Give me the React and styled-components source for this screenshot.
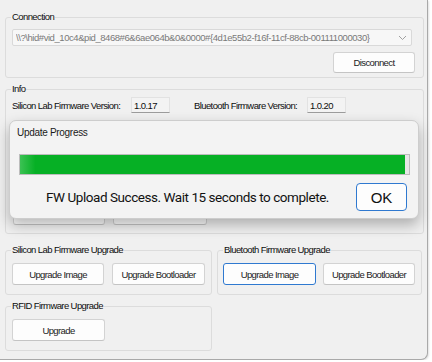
import React from 'react';
import styled, { createGlobalStyle } from 'styled-components';

const GlobalStyle = createGlobalStyle`
  html, body {
    margin: 0;
    padding: 0;
    background: #ffffff;
  }
  body {
    font-family: "Liberation Sans", Arial, sans-serif;
  }
`;

const App = () => {
  return (
    <>
      <GlobalStyle />
      <Window>
        <GroupBox $h={67}>
          <Legend>Connection</Legend>
          <GroupBody $pt={6}>
            <ComboBox>
              <ComboText>
                {'\\\\?\\hid#vid_10c4&pid_8468#6&6ae064b&0&0000#{4d1e55b2-f16f-11cf-88cb-001111000030}'}
              </ComboText>
              <Chevron width="9" height="6" viewBox="0 0 9 6">
                <path d="M1 1 L4.5 4.5 L8 1" fill="none" stroke="#a0a0a0" strokeWidth="1" />
              </Chevron>
            </ComboBox>
            <ButtonRow $justify="flex-end" $pt={6} $pr={2}>
              <Button $w={82} $h={21}>Disconnect</Button>
            </ButtonRow>
          </GroupBody>
        </GroupBox>

        <GroupBox $h={151} $mt={5}>
          <Legend>Info</Legend>
          <GroupBody $pt={2}>
            <InfoRow>
              <Label $w={119}>Silicon Lab Firmware Version:</Label>
              <ValueBox>1.0.17</ValueBox>
              <Label $w={113} $ml={24}>Bluetooth Firmware Version:</Label>
              <ValueBox>1.0.20</ValueBox>
            </InfoRow>
            <ButtonRow $pt={91} $gap={8} $pl={1}>
              <Button $w={92} $h={21}>Read Version</Button>
              <Button $w={94} $h={21}>Reset Device</Button>
            </ButtonRow>
          </GroupBody>
        </GroupBox>

        <UpgradeRow>
          <GroupBox $h={51} $w={207}>
            <Legend>Silicon Lab Firmware Upgrade</Legend>
            <GroupBody $pt={7}>
              <ButtonRow $gap={8}>
                <Button $w={93} $h={22}>Upgrade Image</Button>
                <Button $w={94} $h={22}>Upgrade Bootloader</Button>
              </ButtonRow>
            </GroupBody>
          </GroupBox>
          <GroupBox $h={51} $w={205}>
            <Legend>Bluetooth Firmware Upgrade</Legend>
            <GroupBody $pt={7}>
              <ButtonRow $gap={7} $pl={-1}>
                <Button $w={95} $h={22} $focused>Upgrade Image</Button>
                <Button $w={94} $h={22}>Upgrade Bootloader</Button>
              </ButtonRow>
            </GroupBody>
          </GroupBox>
        </UpgradeRow>

        <GroupBox $h={51} $w={207} $mt={5}>
          <Legend>RFID Firmware Upgrade</Legend>
          <GroupBody $pt={7}>
            <ButtonRow>
              <Button $w={93} $h={22}>Upgrade</Button>
            </ButtonRow>
          </GroupBody>
        </GroupBox>

        <Modal>
          <ModalTitle>Update Progress</ModalTitle>
          <ProgressTrack>
            <ProgressFill style={{ width: '98.9%' }} />
          </ProgressTrack>
          <ModalFooter>
            <Message>FW Upload Success. Wait 15 seconds to complete.</Message>
            <OkButton>OK</OkButton>
          </ModalFooter>
        </Modal>
      </Window>
    </>
  );
};

const Window = styled.div`
  position: relative;
  box-sizing: border-box;
  width: 428px;
  height: 360px;
  padding: 11px 3px 0 5px;
  background: #f0f0f0;
  border-right: 1px solid #a9a9a9;
  border-bottom: 1px solid #a9a9a9;
  border-bottom-right-radius: 7px;
  box-shadow: 1px 1px 2px rgba(0, 0, 0, 0.12);
  display: flex;
  flex-direction: column;
  color: #0d0d0d;
  font-size: 9.5px;
  letter-spacing: -0.6px;
`;

const GroupBox = styled.fieldset`
  box-sizing: border-box;
  min-width: 0;
  width: ${(p) => (p.$w ? `${p.$w}px` : 'auto')};
  height: ${(p) => p.$h}px;
  margin: ${(p) => p.$mt || 0}px 0 0 0;
  padding: 0 6px;
  border: 1px solid #dcdcdc;
  border-radius: 3px;
`;

const Legend = styled.legend`
  padding: 0 1px;
  margin-left: -1px;
  line-height: 12px;
  font-size: 9.5px;
  color: #0d0d0d;
`;

const GroupBody = styled.div`
  display: flex;
  flex-direction: column;
  padding-top: ${(p) => p.$pt || 0}px;
`;

const ComboBox = styled.div`
  box-sizing: border-box;
  width: 400px;
  height: 17px;
  display: flex;
  align-items: center;
  justify-content: space-between;
  padding: 0 4px 0 3px;
  background: #f7f7f7;
  border: 1px solid #d9d9d9;
  border-radius: 2px;
`;

const ComboText = styled.span`
  color: #7a7a7a;
  letter-spacing: -0.44px;
  white-space: nowrap;
  overflow: hidden;
`;

const Chevron = styled.svg`
  flex: none;
`;

const ButtonRow = styled.div`
  display: flex;
  justify-content: ${(p) => p.$justify || 'flex-start'};
  gap: ${(p) => p.$gap || 0}px;
  padding-top: ${(p) => p.$pt || 0}px;
  padding-right: ${(p) => p.$pr || 0}px;
  margin-left: ${(p) => p.$pl || 0}px;
`;

const Button = styled.div`
  box-sizing: border-box;
  width: ${(p) => p.$w}px;
  height: ${(p) => p.$h}px;
  display: flex;
  align-items: center;
  justify-content: center;
  background: #fdfdfd;
  border: 1px solid ${(p) => (p.$focused ? '#2f79d0' : '#d3d3d3')};
  border-bottom-color: ${(p) => (p.$focused ? '#2f79d0' : '#c4c4c4')};
  border-radius: 3px;
  color: #1b1b1b;
  white-space: nowrap;
`;

const InfoRow = styled.div`
  display: flex;
  align-items: center;
  height: 16px;
`;

const Label = styled.span`
  flex: none;
  width: ${(p) => p.$w}px;
  margin-left: ${(p) => p.$ml || 0}px;
  white-space: nowrap;
`;

const ValueBox = styled.div`
  box-sizing: border-box;
  flex: none;
  width: 39px;
  height: 16px;
  padding-left: 2px;
  display: flex;
  align-items: center;
  background: #f3f3f3;
  border: 1px solid #e2e2e2;
  border-bottom: 1px solid #9c9c9c;
`;

const UpgradeRow = styled.div`
  display: flex;
  gap: 5px;
  margin-top: 10px;
`;

const Modal = styled.div`
  position: absolute;
  left: 9px;
  top: 120px;
  box-sizing: border-box;
  width: 410px;
  height: 99px;
  padding: 6px 11px 0 9px;
  background: #f3f3f3;
  border: 1px solid #cdcdcd;
  border-radius: 7px;
  box-shadow: 0 6px 14px rgba(0, 0, 0, 0.28);
  display: flex;
  flex-direction: column;
  letter-spacing: normal;
`;

const ModalTitle = styled.div`
  margin-left: -2px;
  line-height: 12px;
  font-size: 10px;
  letter-spacing: -0.3px;
  color: #1a1a1a;
`;

const ProgressTrack = styled.div`
  box-sizing: border-box;
  margin-top: 15px;
  width: 391px;
  height: 21px;
  background: #e6e6e6;
  border: 1px solid #bcbcbc;
`;

const ProgressFill = styled.div`
  height: 100%;
  background: linear-gradient(90deg, #3cc254 0%, #06b025 4%, #06b025 100%);
`;

const ModalFooter = styled.div`
  display: flex;
  align-items: center;
  margin-top: 8px;
`;

const Message = styled.div`
  flex: 1;
  text-align: center;
  font-family: Roboto, "Liberation Sans", Arial, sans-serif;
  font-size: 13.5px;
  letter-spacing: -0.45px;
  color: #111;
  white-space: nowrap;
`;

const OkButton = styled.div`
  box-sizing: border-box;
  flex: none;
  width: 51px;
  height: 28px;
  display: flex;
  align-items: center;
  justify-content: center;
  background: #fdfdfd;
  border: 1px solid #2f79d0;
  border-radius: 4px;
  font-size: 15px;
  color: #111;
`;

export default App;
